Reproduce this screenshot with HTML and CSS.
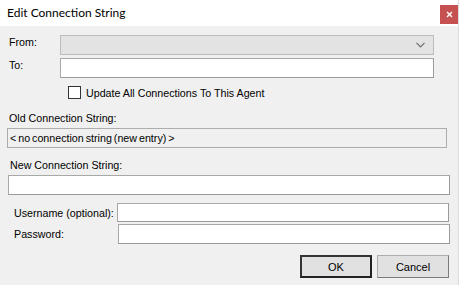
FILE: index.html
```html
<!DOCTYPE html>
<html lang="en">
<head>
   <meta charset="UTF-8">
   <title>Edit Connection String</title>
   <link rel="stylesheet" href="styles.css">
</head>
<body>
   <div class="window">
       <div class="titlebar">
           <span class="title">Edit Connection String</span>
           <div class="close-btn">
               <svg width="7" height="7" viewBox="0 0 7 7"><path d="M1 1 L6 6 M6 1 L1 6" stroke="#fff" stroke-width="1.4"/></svg>
           </div>
       </div>

       <div class="row row-from">
           <label class="lbl">From:</label>
           <div class="combo">
               <svg width="9" height="6" viewBox="0 0 9 6"><path d="M0.5 0.8 L4.5 4.8 L8.5 0.8" stroke="#6e6e6e" stroke-width="1.2" fill="none"/></svg>
           </div>
       </div>
       <div class="row row-to">
           <label class="lbl">To:</label>
           <div class="textbox wide"></div>
       </div>
       <div class="check-row">
           <span class="checkbox"></span>
           <span>Update All Connections To This Agent</span>
       </div>

       <div class="section-label old-label">Old Connection String:</div>
       <div class="readonly-box">&lt; no connection string (new entry) &gt;</div>

       <div class="section-label new-label">New Connection String:</div>
       <div class="textbox full"></div>

       <div class="cred-row user-row">
           <span class="cred-lbl">Username (optional):</span>
           <div class="textbox cred"></div>
       </div>
       <div class="cred-row pass-row">
           <span class="cred-lbl">Password:</span>
           <div class="textbox cred"></div>
       </div>

       <div class="buttons">
           <button class="btn btn-default">OK</button>
           <button class="btn">Cancel</button>
       </div>
   </div>
</body>
</html>
```

FILE: styles.css
```css
body {
    margin: 0;
    background-color: #f0f0f0;
    font-family: 'Liberation Sans', Arial, sans-serif;
    font-size: 10.7px;
    color: #000;
}
.window {
    width: 458px;
    height: 285px;
    border-right: 1px solid #dcdcdc;
    overflow: hidden;
}
.titlebar {
    height: 26px;
    background-color: #fff;
    display: flex;
    justify-content: space-between;
    align-items: flex-start;
}
.title {
    font-family: Lato, sans-serif;
    font-size: 12px;
    margin: 6px 0 0 7px;
    line-height: 14px;
}
.close-btn {
    width: 18px;
    height: 19px;
    margin-top: 5px;
    background-color: #c75050;
    display: flex;
    align-items: center;
    justify-content: center;
}
.row {
    display: flex;
    align-items: flex-start;
}
.row-from {
    margin-top: 9px;
}
.row-to {
    margin-top: 3px;
}
.lbl {
    width: 51px;
    padding-left: 9px;
    line-height: 13px;
    margin-top: 1px;
}
.combo {
    width: 364px;
    height: 18px;
    background-color: #e3e3e3;
    border: 1px solid #bcbcbc;
    display: flex;
    align-items: center;
    justify-content: flex-end;
    padding-right: 8px;
}
.textbox {
    height: 18px;
    background-color: #fff;
    border: 1px solid #a8a8a8;
    border-right-color: #9a9a9a;
    border-bottom-color: #9a9a9a;
}
.wide {
    width: 372px;
}
.check-row {
    display: flex;
    align-items: center;
    margin: 8px 0 0 68px;
    height: 13px;
}
.checkbox {
    width: 11px;
    height: 11px;
    border: 1px solid #333;
    background-color: #fff;
    margin-right: 5px;
}
.section-label {
    line-height: 13px;
    padding-left: 9px;
}
.old-label {
    margin-top: 13px;
}
.readonly-box {
    margin: 3px 0 0 7px;
    width: 436px;
    height: 18px;
    line-height: 18px;
    padding-left: 2px;
    border: 1px solid #adadad;
    background-color: #f0f0f0;
    word-spacing: -1px;
}
.new-label {
    margin-top: 11px;
    padding-left: 10px;
}
.full {
    margin: 3px 0 0 8px;
    width: 440px;
}
.cred-row {
    display: flex;
    align-items: center;
    margin-top: 8px;
}
.pass-row {
    margin-top: 2px;
}
.cred-lbl {
    width: 103px;
    padding-left: 14px;
}
.cred {
    width: 330px;
}
.user-row .cred {
    height: 17px;
}
.pass-row .cred {
    margin-left: 1px;
}
.buttons {
    display: flex;
    justify-content: flex-end;
    gap: 5px;
    margin: 11px 9px 0 0;
}
.btn {
    width: 72px;
    height: 23px;
    font-family: 'Liberation Sans', Arial, sans-serif;
    font-size: 11px;
    background-color: #e1e1e1;
    border: 1px solid #adadad;
    border-right-color: #7a7a7a;
    border-bottom-color: #7a7a7a;
    padding: 0;
    color: #000;
}
.btn-default {
    border: 2px solid #333;
    border-right-color: #222;
    border-bottom-color: #222;
}
```
